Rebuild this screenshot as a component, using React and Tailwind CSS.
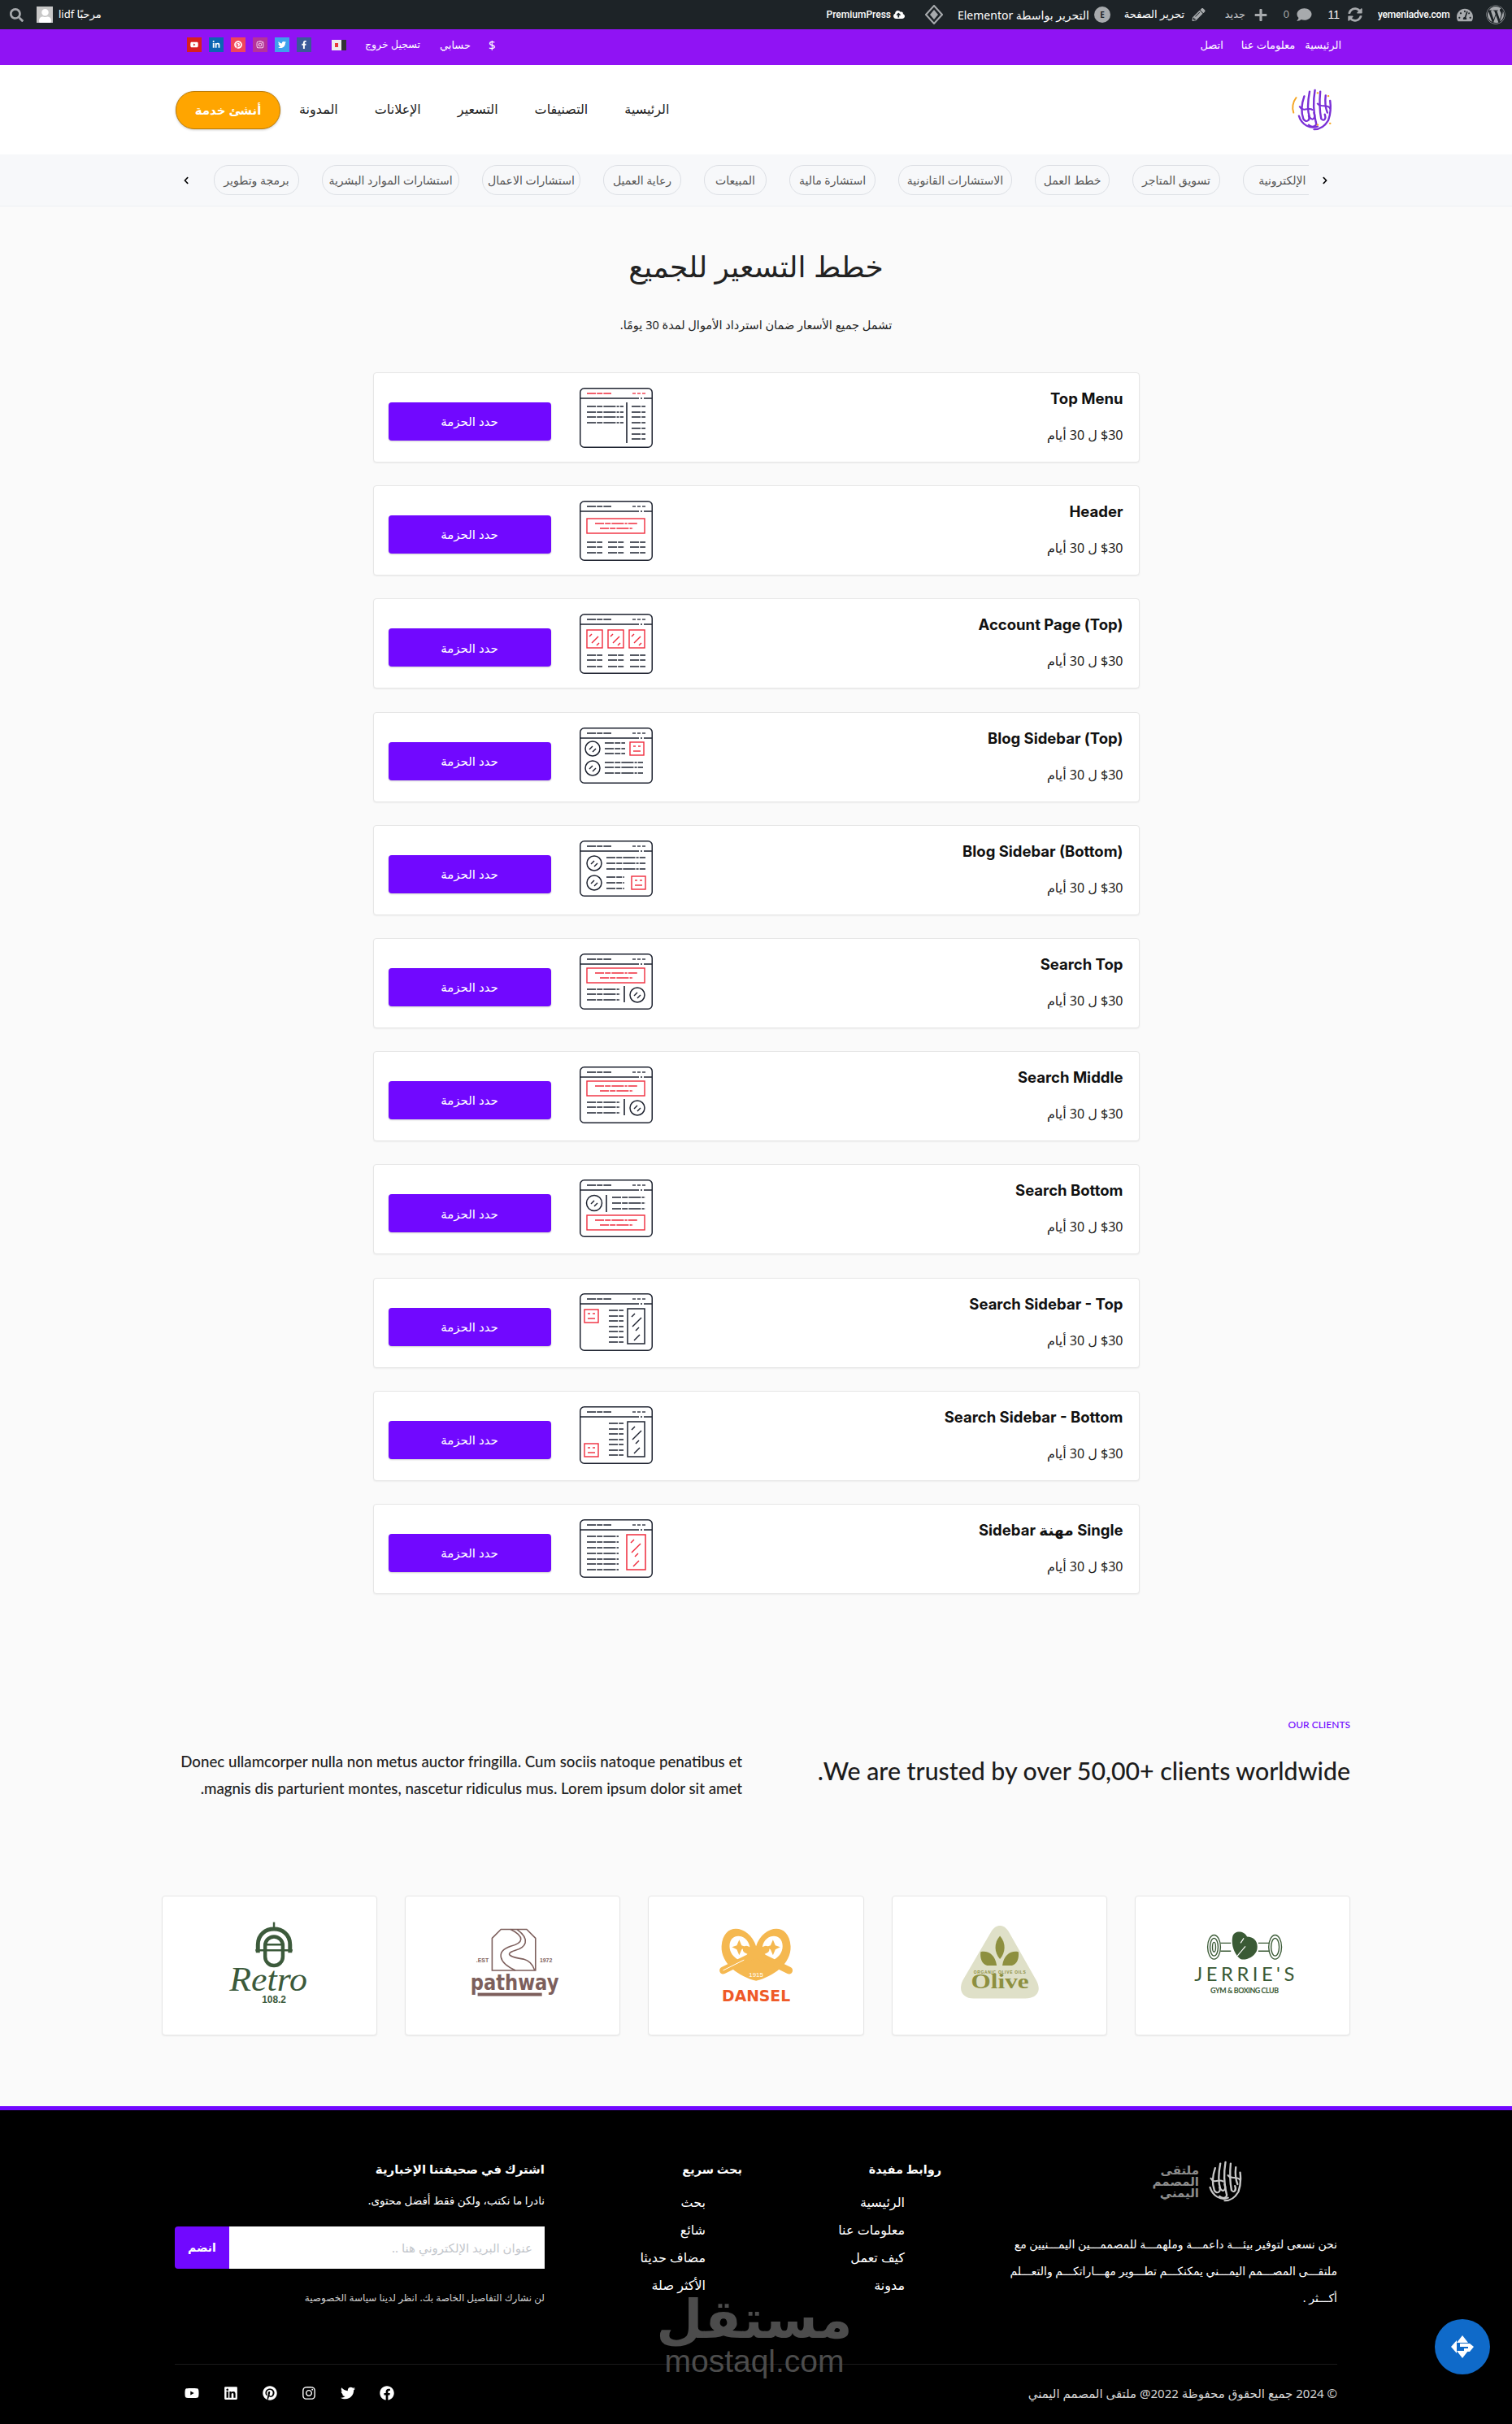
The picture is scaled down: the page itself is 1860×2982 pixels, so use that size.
import {
  FaWordpress, FaTachometerAlt, FaSyncAlt, FaComment, FaPlus, FaPencilAlt, FaSearch, FaUser,
  FaFacebookF, FaFacebook, FaTwitter, FaInstagram, FaPinterest, FaLinkedinIn, FaYoutube, FaLinkedin,
  FaChevronLeft, FaChevronRight, FaCloudUploadAlt,
} from 'react-icons/fa'

const DARK = '#1e2330'
const RED = '#ef2b3c'

const ar = 'font-["Noto_Sans","DejaVu_Sans",sans-serif]'

// wireframe helpers
function Ln({ x1, x2, y, c = DARK, w = 1.3 }) {
  return <line x1={x1} x2={x2} y1={y} y2={y} stroke={c} strokeWidth={w} strokeDasharray="11 1.2 7 1.2 15 1.2 3 1.2" />
}
function Lines({ x1, x2, ys, c }) {
  return ys.map(y => <Ln key={y} x1={x1} x2={x2} y={y} c={c} />)
}
function Slash({ x, y, l = 6, c = DARK, w = 1.5 }) {
  return <line x1={x} y1={y} x2={x + l} y2={y - l} stroke={c} strokeWidth={w} />
}
function Circle({ cx, cy, r = 9 }) {
  return (
    <g>
      <circle cx={cx} cy={cy} r={r} fill="none" stroke={DARK} strokeWidth="1.5" />
      <Slash x={cx - 4} y={cy + 1} l={4} />
      <Slash x={cx} y={cy + 4} l={4} />
    </g>
  )
}
function Face({ x, y }) {
  return (
    <g>
      <rect x={x} y={y} width="17" height="16" fill="none" stroke={RED} strokeWidth="1.4" />
      <line x1={x + 4} x2={x + 7} y1={y + 5} y2={y + 5} stroke={RED} strokeWidth="1.4" />
      <line x1={x + 10} x2={x + 13} y1={y + 5} y2={y + 5} stroke={RED} strokeWidth="1.4" />
      <line x1={x + 4} x2={x + 13} y1={y + 11} y2={y + 11} stroke={RED} strokeWidth="1.4" />
    </g>
  )
}
function Banner({ y }) {
  return (
    <g>
      <rect x="9" y={y} width="71" height="18" fill="none" stroke={RED} strokeWidth="1.4" />
      <Ln x1={19} x2={71} y={y + 6} c={RED} />
      <Ln x1={25} x2={66} y={y + 12} c={RED} />
    </g>
  )
}
function Columns({ ys }) {
  return (
    <g>
      <Lines x1={9} x2={28} ys={ys} />
      <Lines x1={35} x2={55} ys={ys} />
      <Lines x1={62} x2={81} ys={ys} />
    </g>
  )
}
function TallBox({ x, w, c }) {
  return (
    <g>
      <rect x={x} y="19" width={w} height="43" fill="none" stroke={c} strokeWidth="1.5" />
      <Slash x={x + 5} y={29} l={4} c={c} />
      <Slash x={x + 6} y={41} l={11} c={c} />
      <Slash x={x + 10} y={46} l={4} c={c} />
      <Slash x={x + 8} y={58} l={7} c={c} />
    </g>
  )
}

const wire = {
  topMenu: (
    <g>
      <Lines x1={9} x2={54} ys={[23, 30, 36, 43]} />
      <line x1="58" x2="58" y1="18" y2="68" stroke={DARK} strokeWidth="1.6" />
      <Lines x1={64} x2={81} ys={[23, 30, 36, 43, 50, 57, 63]} />
    </g>
  ),
  header: (
    <g>
      <Banner y={22} />
      <Columns ys={[51, 57, 64]} />
    </g>
  ),
  account: (
    <g>
      {[9, 35, 61].map(x => (
        <g key={x}>
          <rect x={x} y="20" width="19" height="22" fill="none" stroke={RED} strokeWidth="1.4" />
          <Slash x={x + 3} y={28} l={3} c={RED} />
          <Slash x={x + 6} y={36} l={8} c={RED} />
          <Slash x={x + 12} y={39} l={3} c={RED} />
        </g>
      ))}
      <Columns ys={[51, 57, 65]} />
    </g>
  ),
  blogTop: (
    <g>
      <Circle cx={16} cy={26} />
      <Circle cx={16} cy={50} />
      <Lines x1={31} x2={56} ys={[19, 26, 32]} />
      <Face x={62} y={18} />
      <Lines x1={31} x2={78} ys={[43, 49, 56]} />
    </g>
  ),
  blogBottom: (
    <g>
      <Circle cx={18} cy={28} />
      <Circle cx={18} cy={52} />
      <Lines x1={33} x2={81} ys={[21, 28, 35]} />
      <Lines x1={33} x2={55} ys={[45, 52, 59]} />
      <Face x={64} y={44} />
    </g>
  ),
  searchTop: (
    <g>
      <Banner y={18} />
      <Lines x1={9} x2={50} ys={[44, 50, 57]} />
      <line x1="55" x2="55" y1="40" y2="60" stroke={DARK} strokeWidth="1.6" />
      <Circle cx={71} cy={51} />
    </g>
  ),
  searchBottom: (
    <g>
      <Circle cx={18} cy={29} r={9.5} />
      <line x1="33" x2="33" y1="19" y2="40" stroke={DARK} strokeWidth="1.6" />
      <Lines x1={40} x2={81} ys={[22, 29, 36]} />
      <Banner y={44} />
    </g>
  ),
  sideTop: (
    <g>
      <Face x={6} y={20} />
      <Lines x1={36} x2={54} ys={[21, 28, 34, 41, 47, 54, 60]} />
      <TallBox x={59} w={21} c={DARK} />
    </g>
  ),
  sideBottom: (
    <g>
      <Face x={6} y={46} />
      <Lines x1={36} x2={54} ys={[21, 28, 34, 41, 47, 54, 60]} />
      <TallBox x={59} w={21} c={DARK} />
    </g>
  ),
  sideSingle: (
    <g>
      <Lines x1={9} x2={48} ys={[21, 28, 35, 42, 49, 55, 62]} />
      <TallBox x={58} w={23} c={RED} />
    </g>
  ),
}

function Wireframe({ kind, h, topRed }) {
  const c = topRed ? RED : DARK
  return (
    <svg viewBox={`0 0 90 ${h}`} className="block w-[90px] shrink-0" style={{ height: h }}>
      <rect x="0.75" y="0.75" width="88.5" height={h - 1.5} rx="5" fill="#fff" stroke={DARK} strokeWidth="1.5" />
      <Ln x1={9} x2={39} y={7} c={c} />
      <Lines x1={65} x2={69} ys={[7]} c={c} />
      <Lines x1={71} x2={75} ys={[7]} c={c} />
      <Lines x1={77} x2={81} ys={[7]} c={c} />
      <line x1="1" x2="89" y1="13" y2="13" stroke={DARK} strokeWidth="1.3" strokeDasharray="72 2 2 2 20" />
      {wire[kind]}
    </svg>
  )
}

const plans = [
  { title: 'Top Menu', kind: 'topMenu', h: 74, topRed: true },
  { title: 'Header', kind: 'header', h: 74 },
  { title: 'Account Page (Top)', kind: 'account', h: 74 },
  { title: 'Blog Sidebar (Top)', kind: 'blogTop', h: 69 },
  { title: 'Blog Sidebar (Bottom)', kind: 'blogBottom', h: 69 },
  { title: 'Search Top', kind: 'searchTop', h: 69 },
  { title: 'Search Middle', kind: 'searchTop', h: 70 },
  { title: 'Search Bottom', kind: 'searchBottom', h: 71 },
  { title: 'Search Sidebar - Top', kind: 'sideTop', h: 71 },
  { title: 'Search Sidebar - Bottom', kind: 'sideBottom', h: 71 },
  { title: 'Single مهنة Sidebar', kind: 'sideSingle', h: 72 },
]

const chips = [
  { label: 'التجارة الإلكترونية', cls: 'w-[140px] mr-[-59px]' },
  { label: 'تسويق المتاجر', cls: 'w-[108px]' },
  { label: 'خطط العمل', cls: 'w-[92px]' },
  { label: 'الاستشارات القانونية', cls: 'w-[140px]' },
  { label: 'استشارة مالية', cls: 'w-[106px]' },
  { label: 'المبيعات', cls: 'w-[77px]' },
  { label: 'رعاية العميل', cls: 'w-[96px]' },
  { label: 'استشارات الاعمال', cls: 'w-[121px]' },
  { label: 'استشارات الموارد البشرية', cls: 'w-[169px]' },
  { label: 'برمجة وتطوير', cls: 'w-[105px]' },
]

function Calligraphy({ color, accent, className }) {
  const strokes = [
    'M15 12 C12 22 11 32 14 42 C17 48 22 44 20 38', 'M21 6 C19 18 18 30 21 40 C25 46 28 40 26 34',
    'M27 4 C25 18 25 32 28 46 C30 52 24 54 20 50', 'M33 6 C32 18 32 30 34 42 C37 46 40 42 38 36',
    'M39 11 C38 20 39 28 41 34', 'M44 18 C45 26 45 34 42 44 C38 52 32 56 26 56',
    'M10 26 C14 34 20 26 24 30', 'M9 38 C12 50 22 56 30 52', 'M30 22 C34 28 40 22 44 28',
  ]
  return (
    <svg viewBox="0 0 52 60" className={className} preserveAspectRatio="none">
      {strokes.map(d => <path key={d} d={d} fill="none" stroke={color} strokeWidth="2.2" strokeLinecap="round" />)}
      {accent && (
        <g>
          <path d="M6 14 C2 20 1 28 3 34" fill="none" stroke={accent} strokeWidth="1.8" strokeLinecap="round" />
          <circle cx="30" cy="8" r="1.2" fill={accent} />
          <circle cx="42" cy="12" r="1.2" fill={accent} />
          <circle cx="44" cy="48" r="1.2" fill={accent} />
          <circle cx="30" cy="50" r="1.2" fill={accent} />
        </g>
      )}
    </svg>
  )
}

function LogoRetro() {
  const c = '#3c5a3b'
  return (
    <svg viewBox="0 0 265 172" className="block h-full w-full">
      <line x1="138" x2="138" y1="32" y2="40" stroke={c} strokeWidth="2.5" />
      <path d="M118 70 V60 C118 34 158 34 158 60 V70" fill="none" stroke={c} strokeWidth="5" />
      <rect x="127" y="50" width="22" height="36" rx="11" fill="none" stroke={c} strokeWidth="4.5" />
      <path d="M115 67 H127 M149 67 H161 M128 60 H148 M128 67 H148" stroke={c} strokeWidth="2.5" />
      <text x="131" y="117" textAnchor="middle" fontFamily='"Liberation Serif",serif' fontStyle="italic" fontSize="42" fill={c} textLength="97" lengthAdjust="spacingAndGlyphs">Retro</text>
      <text x="138" y="133" textAnchor="middle" fontFamily='"Liberation Sans",sans-serif' fontWeight="700" fontSize="12" fill={c}>108.2</text>
    </svg>
  )
}

function LogoPathway() {
  const c = '#7d5f5c'
  return (
    <svg viewBox="0 0 265 172" className="block h-full w-full">
      <path d="M107 92 V52 L118 41 H150 L161 52 V92 Z" fill="none" stroke={c} strokeWidth="1.6" />
      <path d="M130 41 C148 50 146 58 130 62 C112 68 114 82 136 92" fill="none" stroke={c} strokeWidth="1.6" />
      <path d="M138 41 C156 54 148 64 136 67 C120 72 132 76 146 78 C154 80 158 86 160 92" fill="none" stroke={c} strokeWidth="1.6" />
      <text x="95" y="82" textAnchor="middle" fontFamily='"Liberation Sans",sans-serif' fontSize="7" fontWeight="700" fill={c}>EST.</text>
      <text x="174" y="82" textAnchor="middle" fontFamily='"Liberation Sans",sans-serif' fontSize="7" fontWeight="700" fill={c}>1972</text>
      <text x="135" y="116" textAnchor="middle" fontFamily='"DejaVu Sans",sans-serif' fontSize="26" fontWeight="700" fill={c} textLength="110" lengthAdjust="spacingAndGlyphs">pathway</text>
      <rect x="89" y="120" width="80" height="4" fill={c} />
    </svg>
  )
}

function LogoDansel() {
  const y = '#f5b850'
  return (
    <svg viewBox="0 0 265 172" className="block h-full w-full">
      <path d="M133 62 C125 36 92 30 90 62 C89 84 112 100 133 105 C154 100 177 84 176 62 C174 30 141 36 133 62 Z" fill={y} />
      <path d="M100 62 C100 44 122 46 125 62 C126 72 116 78 113 80 C105 76 100 70 100 62 Z M141 62 C144 46 166 44 166 62 C166 70 161 76 153 80 C150 78 140 72 141 62 Z" fill="#fff" />
      <path d="M92 92 L145 66 M174 92 L121 66" stroke={y} strokeWidth="9" strokeLinecap="round" />
      <path d="M92 92 L118 79" stroke="#fff" strokeWidth="1" />
      <path d="M112 54 L115 61 L121 63 L115 66 L112 73 L109 66 L103 63 L109 61 Z M154 54 L157 61 L163 63 L157 66 L154 73 L151 66 L145 63 L151 61 Z" fill={y} />
      <text x="133" y="100" textAnchor="middle" fontFamily='"Liberation Sans",sans-serif' fontSize="8" fill="#fff">1915</text>
      <text x="133" y="131" textAnchor="middle" fontFamily='"DejaVu Sans",sans-serif' fontSize="20" fontWeight="700" fill="#ef5a28" textLength="85" lengthAdjust="spacingAndGlyphs">DANSEL</text>
    </svg>
  )
}

function LogoOlive() {
  const c = '#8d8f3f'
  return (
    <svg viewBox="0 0 265 172" className="block h-full w-full">
      <path d="M122 44 C128 34 138 34 144 44 L178 104 C186 118 178 127 165 127 H100 C88 127 80 118 87 104 Z" fill="#dfe0c8" />
      <path d="M133 49 C141 58 140 70 133 78 C126 70 125 58 133 49 Z" fill={c} />
      <path d="M109 69 C118 67 127 72 129 86 H117 C110 84 108 76 109 69 Z M156 69 C147 67 138 72 136 86 H148 C155 84 157 76 156 69 Z" fill={c} />
      <text x="133" y="96" textAnchor="middle" fontFamily='"Liberation Sans",sans-serif' fontSize="5" fontWeight="700" letterSpacing="0.7" fill={c}>ORGANIC OLIVE OILS</text>
      <text x="133" y="114" textAnchor="middle" fontFamily='"Liberation Serif",serif' fontSize="26" fontWeight="700" fill={c} textLength="72" lengthAdjust="spacingAndGlyphs">Olive</text>
    </svg>
  )
}

function LogoJerries() {
  const c = '#3a5a35'
  return (
    <svg viewBox="0 0 265 172" className="block h-full w-full">
      <g fill="none" stroke={c} strokeWidth="1.4">
        <ellipse cx="97" cy="63" rx="8" ry="15" />
        <ellipse cx="97" cy="63" rx="5" ry="11" />
        <ellipse cx="97" cy="63" rx="2" ry="6" />
        <ellipse cx="173" cy="63" rx="8" ry="15" />
        <ellipse cx="173" cy="63" rx="5" ry="11" />
        <path d="M105 58 H118 M105 68 H118 M152 58 H166 M152 68 H166" />
      </g>
      <path d="M120 50 C122 42 134 42 138 50 C148 50 153 58 150 68 C146 76 136 80 130 78 C122 72 118 60 120 50 Z" fill={c} />
      <path d="M126 74 L136 62 M130 58 L134 52" stroke="#fff" strokeWidth="1.2" />
      <text x="135" y="105" textAnchor="middle" fontFamily='"Lato",sans-serif' fontSize="24" fill={c} letterSpacing="0.5" textLength="125">JERRIE'S</text>
      <text x="135" y="120" textAnchor="middle" fontFamily='"Lato",sans-serif' fontSize="9" fontWeight="700" fill={c} textLength="85">GYM &amp; BOXING CLUB</text>
    </svg>
  )
}

const socialTop = [
  { Icon: FaFacebookF, cls: 'bg-[#3b5998]' },
  { Icon: FaTwitter, cls: 'bg-[#3fa1ec]' },
  { Icon: FaInstagram, cls: 'bg-[#b5339a]' },
  { Icon: FaPinterest, cls: 'bg-[#f0465a]' },
  { Icon: FaLinkedinIn, cls: 'bg-[#0b66b3]' },
  { Icon: FaYoutube, cls: 'bg-[#d81f1f]' },
]

const usefulLinks = ['الرئيسية', 'معلومات عنا', 'كيف تعمل', 'مدونة']
const searchLinks = ['بحث', 'شائع', 'مضاف حديثا', 'الأكثر صلة']

function LinkColumn({ title, links, className }) {
  return (
    <div className={className}>
      <h4 className="text-[14.5px] font-bold leading-[24px] text-white">{title}</h4>
      <ul className="mt-[15px] pr-[45px]">
        {links.map(l => <li key={l} className="h-[34px] text-[16px] leading-[28px] text-white">{l}</li>)}
      </ul>
    </div>
  )
}

export default function App() {
  return (
    <div dir="rtl" className={`relative h-[2982px] w-full overflow-hidden bg-[#fafafa] ${ar}`}>
      {/* admin bar */}
      <div className="flex h-9 items-center justify-between bg-[#1d2327] pr-2 pl-3 text-[13px] text-[#c3c4c7]">
        <div className="flex items-center whitespace-nowrap">
          <FaWordpress size={24} className="text-[#a7aaad]" />
          <FaTachometerAlt size={19} className="mr-4 w-[20px] text-[#a7aaad]" />
          <span className="mr-2 w-[89px] font-['Roboto'] text-[12px] font-medium tracking-[-0.2px] text-white" dir="ltr">yemeniadve.com</span>
          <FaSyncAlt size={18} className="mr-[18px] w-[20px] text-[#a7aaad]" />
          <span className="mr-[9px] w-[15px] font-['Liberation_Sans'] text-[14px] text-white">11</span>
          <FaComment size={18} className="mr-[19px] w-[19px] text-[#a7aaad]" />
          <span className="mr-[9px] w-[8px] font-['Liberation_Sans'] text-[#a7aaad]">0</span>
          <FaPlus size={17} className="mr-[17px] w-[20px] text-[#a7aaad]" />
          <span className="mr-[9px] w-[29px]">جديد</span>
          <FaPencilAlt size={16} className="mr-[19px] w-[19px] text-[#a7aaad]" />
          <span className="mr-2 w-[70px] text-white">تحرير الصفحة</span>
          <span className="mr-[21px] flex h-5 w-5 items-center justify-center rounded-full bg-[#a7aaad] text-[10px] font-bold text-[#1d2327]">E</span>
          <span className="mr-[6px] w-[161px] text-[14px] text-white">التحرير بواسطة Elementor</span>
          <svg viewBox="0 0 22 24" className="mr-[19px] h-6 w-[22px]">
            <path d="M11 1 L21 12 L11 23 L1 12 Z" fill="none" stroke="#a7aaad" strokeWidth="2" />
            <path d="M11 6 L16 12 L11 18 L6 12 Z" fill="#a7aaad" />
          </svg>
          <FaCloudUploadAlt size={14} className="mr-[25px] text-white" />
          <span className="mr-[3px] font-['Roboto'] text-[12px] font-medium text-white" dir="ltr">PremiumPress</span>
        </div>
        <div className="flex items-center">
          <span className="text-[13px] text-white">مرحبًا lidf</span>
          <span className="mr-[7px] flex h-[20px] w-[20px] items-end justify-center overflow-hidden bg-[#c8c8c8]">
            <FaUser size={17} className="text-white" />
          </span>
          <FaSearch size={17} className="mr-[16px] text-[#a7aaad]" />
        </div>
      </div>

      {/* purple strip */}
      <div className="flex h-[44px] items-start justify-between bg-[#9013f4] pt-[9px] pr-[210px] pl-[230px] text-[13px] leading-[20px] text-white">
        <div className="flex gap-[12px]">
          <span>الرئيسية</span>
          <span className="ml-[10px]">معلومات عنا</span>
          <span>اتصل</span>
        </div>
        <div className="flex items-center">
          <span className="text-[15px]">$</span>
          <span className="mr-[22px]">حسابي</span>
          <span className="mr-[24px] text-[12.5px]">تسجيل خروج</span>
          <span className="mr-[23px] flex h-[13px] w-[18px]">
            <span className="w-1/3 bg-[#333]" />
            <span className="flex w-2/3 items-center justify-center bg-[#eee]">
              <span className="h-[5px] w-[4px] bg-[#e8383b]" />
            </span>
          </span>
          <div className="mr-[25px] flex gap-[9px]">
            {socialTop.map(({ Icon, cls }, i) => (
              <span key={i} className={`flex h-[18px] w-[18px] items-center justify-center text-white ${cls}`}>
                <Icon size={10} />
              </span>
            ))}
          </div>
        </div>
      </div>

      {/* main nav */}
      <div className="flex h-[110px] items-center justify-between bg-white pr-[215px] pl-[216px]">
        <Calligraphy color="#7a2fd6" accent="#f5a623" className="h-[56px] w-[57px]" />
        <div className="flex items-center">
          <nav className="flex items-center gap-[45px] pb-[2px] text-[16px] text-[#222]">
            <span>الرئيسية</span>
            <span>التصنيفات</span>
            <span>التسعير</span>
            <span>الإعلانات</span>
            <span>المدونة</span>
          </nav>
          <span className="mr-[23px] flex h-[47px] w-[129px] items-center justify-center rounded-[23px] border border-[#b97a08] bg-[#ffa500] text-[15px] font-bold text-white shadow-[0_1px_3px_rgba(0,0,0,0.2)]">أنشئ خدمة</span>
        </div>
      </div>

      {/* category chips */}
      <div className="flex h-[64px] items-center border-b border-[#eef0f3] bg-[#f7f8fa] pr-[225px] pl-[224px]">
        <FaChevronRight size={10} className="text-black" />
        <div className="mr-[15px] flex flex-1 gap-[28px] overflow-hidden">
          {chips.map(c => (
            <span key={c.label} className={`flex h-[37px] shrink-0 items-center justify-center rounded-[18px] border border-[#dcdfe4] text-[14px] whitespace-nowrap text-[#555] ${c.cls}`}>
              {c.label}
            </span>
          ))}
        </div>
        <FaChevronLeft size={10} className="mr-[28px] text-black" />
      </div>

      {/* pricing */}
      <main className="pt-[50px]">
        <h1 className="text-center text-[36px] leading-[48px] font-medium text-[#222]">خطط التسعير للجميع</h1>
        <p className="mt-[35px] text-center text-[14.5px] leading-[24px] text-[#222]">تشمل جميع الأسعار ضمان استرداد الأموال لمدة 30 يومًا.</p>

        <div className="mx-auto mt-[47px] flex w-[943px] flex-col gap-[28.2px]">
          {plans.map(p => (
            <div key={p.title} className="flex h-[111px] items-start justify-between rounded-[4px] border border-[#e6e6e6] bg-white pr-[19px] pl-[18px] shadow-[0_1px_2px_rgba(0,0,0,0.05)]">
              <div className="pt-[19px]">
                <h3 className="font-['Inter','DejaVu_Sans',sans-serif] text-[18.5px] leading-[24px] font-bold text-[#111]">{p.title}</h3>
                <p className="mt-[21px] text-[16px] leading-[24px] text-[#222]">$30 ل 30 أيام</p>
              </div>
              <div className="flex gap-[35px] pt-[18px]">
                <Wireframe kind={p.kind} h={p.h} topRed={p.topRed} />
                <span className="mt-[18px] flex h-[47px] w-[200px] items-center justify-center rounded-[4px] bg-[#7108ff] text-[15px] text-white shadow-[0_1px_2px_rgba(0,0,0,0.2)]">حدد الحزمة</span>
              </div>
            </div>
          ))}
        </div>

        {/* clients */}
        <section className="mx-auto mt-[153px] w-[1462px]">
          <p className="font-['Lato'] text-[12px] leading-[16px] font-medium text-[#7108ff]">OUR CLIENTS</p>
          <div className="mt-[21px] flex items-start">
            <h2 className="mt-[7px] w-[748px] font-['Lato'] text-[30.3px] leading-[40px] font-medium text-[#1c1c1c]">We are trusted by over 50,00+ clients worldwide.</h2>
            <p className="w-[714px] font-['Lato'] text-[18.7px] leading-[33px] font-medium text-[#222]">
              Donec ullamcorper nulla non metus auctor fringilla. Cum sociis natoque penatibus et magnis dis parturient montes, nascetur ridiculus mus. Lorem ipsum dolor sit amet.
            </p>
          </div>
          <div className="mt-[115px] grid grid-cols-5 gap-[34px]">
            {[LogoJerries, LogoOlive, LogoDansel, LogoPathway, LogoRetro].map((Logo, i) => (
              <div key={i} className="h-[172px] rounded-[4px] border border-[#e6e6e6] bg-white shadow-[0_1px_2px_rgba(0,0,0,0.06)]">
                <Logo />
              </div>
            ))}
          </div>
        </section>
      </main>

      {/* footer */}
      <footer className="mt-[87px] border-t-[5px] border-[#7108ff] bg-black px-[215px] pb-[80px]">
        <div className="flex h-[313px] border-b border-[#1a1a1a] pt-[60px]">
          <div className="w-[447px]">
            <div className="flex items-center gap-[4px] pr-[111px]">
              <Calligraphy color="#c9c9c9" className="h-[55px] w-[55px]" />
              <span className="text-[15px] leading-[14px] font-bold whitespace-pre-line text-[#8c8c8c]">{'ملتقى\nالمصمم\nاليمني'}</span>
            </div>
            <p className="mt-[33px] text-[14px] leading-[33px] whitespace-nowrap text-white">
              <span className="block">نحن نسعى لتوفير بيئـــة داعمـــة وملهمـــة للمصممـــين اليمـــنيين مع</span>
              <span className="block">ملتقـــى المصـــمم اليمـــني يمكنكـــم تطـــوير مهـــاراتكـــم والتعـــلم</span>
              <span className="block">أكـــثر .</span>
            </p>
          </div>
          <LinkColumn title="روابط مفيدة" links={usefulLinks} className="mr-[40px] w-[245px]" />
          <LinkColumn title="بحث سريع" links={searchLinks} className="w-[243px]" />
          <div className="w-[455px]">
            <h4 className="text-[15px] leading-[24px] font-bold text-white">اشترك في صحيفتنا الإخبارية</h4>
            <p className="mt-[15px] text-[13.5px] leading-[24px] text-white">نادرا ما نكتب، ولكن فقط أفضل محتوى.</p>
            <div className="mt-[20px] flex h-[52px]">
              <div className="flex flex-1 items-center bg-white pr-[15px] text-[15px] text-[#c4c7cc]">عنوان البريد الإلكتروني هنا ..</div>
              <span className="flex w-[67px] items-center justify-center rounded-l-[4px] bg-[#7108ff] text-[14px] font-bold text-white">انضم</span>
            </div>
            <p className="mt-[26px] text-[12px] leading-[20px] text-[#cfcfcf]">لن نشارك التفاصيل الخاصة بك. انظر لدينا سياسة الخصوصية</p>
          </div>
        </div>
        <div className="flex h-[70px] items-center justify-between">
          <span className="text-[15px] text-[#d5d5d5]">© 2024 جميع الحقوق محفوظة 2022@ ملتقى المصمم اليمني</span>
          <div className="flex flex-row-reverse gap-[30px] pl-[12px] text-white" dir="ltr">
            <FaFacebook size={18} />
            <FaTwitter size={18} />
            <FaInstagram size={18} />
            <FaPinterest size={18} />
            <FaLinkedin size={18} />
            <FaYoutube size={18} />
          </div>
        </div>
      </footer>

      {/* watermark + floating button sit over the footer */}
      <div className="pointer-events-none absolute top-[2812px] left-[815px] flex w-[226px] flex-col items-center text-[#4c4c4c]">
        <span className="text-[66px] leading-[76px] font-bold">مستقل</span>
        <span className="font-['Liberation_Sans'] text-[39px] leading-[34px] font-medium">mostaql.com</span>
      </div>
      <div className="absolute top-[2853px] left-[1765px] flex h-[68px] w-[68px] items-center justify-center rounded-full bg-[#0f6ac9]">
        <svg viewBox="0 0 32 32" className="h-[32px] w-[32px]">
          <path d="M16 2 L23 11 H9 Z M16 30 L23 21 H9 Z M2 16 L9 8 V24 Z" fill="#fff" />
          <path d="M13 12 H25 L30 16 L25 22 H18 V18 H23 V16 H13 Z" fill="#fff" />
        </svg>
      </div>
    </div>
  )
}
